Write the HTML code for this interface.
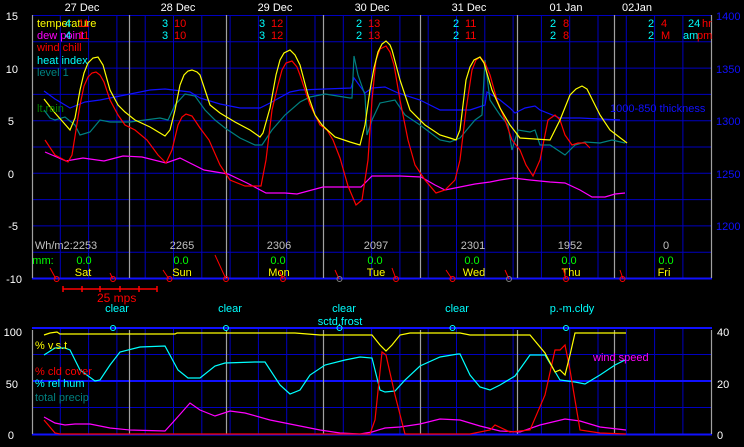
<!DOCTYPE html>
<html><head><meta charset="utf-8"><style>
html,body{margin:0;padding:0;background:#000;}
svg{display:block;}
text{font-family:"Liberation Sans",sans-serif;font-size:11px;}
</style></head><body>
<svg width="744" height="447" viewBox="0 0 744 447" xmlns="http://www.w3.org/2000/svg">
<rect width="744" height="447" fill="#000"/>
<g stroke="#0000c0" stroke-width="1" fill="none">
<path d="M32 15.5H712M32 41.8H712M32 68.1H712M32 94.4H712M32 120.7H712M32 147H712M32 173.3H712M32 199.6H712M32 225.9H712M32 252.2H712"/>
<path d="M60.3 15V278M88.6 15V278M116.9 15V278M145.2 15V278M173.5 15V278M201.8 15V278M230.1 15V278M258.4 15V278M286.7 15V278M315 15V278M343.3 15V278M371.6 15V278M399.9 15V278M428.2 15V278M456.5 15V278M484.8 15V278M513.1 15V278M541.4 15V278M569.7 15V278M598 15V278M626.3 15V278M654.6 15V278M682.9 15V278"/>
<path d="M32 354.5H712M32 407.5H712"/>
<path d="M60.3 328V434M88.6 328V434M116.9 328V434M145.2 328V434M173.5 328V434M201.8 328V434M230.1 328V434M258.4 328V434M286.7 328V434M315 328V434M343.3 328V434M371.6 328V434M399.9 328V434M428.2 328V434M456.5 328V434M484.8 328V434M513.1 328V434M541.4 328V434M569.7 328V434M598 328V434M626.3 328V434M654.6 328V434M682.9 328V434"/>
</g>
<g stroke="#1010ff" stroke-width="2" fill="none">
<path d="M32 278.5H712M32 328H712M32 381H712M32 434.5H712"/>
</g>
<g stroke="#a0a0a0" stroke-width="1.2" fill="none">
<path d="M32.5 15V278M129.5 15V278M226.5 15V278M323.5 15V278M420.5 15V278M517.5 15V278M614.5 15V278M711.5 15V278"/>
<path d="M32.5 330V434M129.5 330V434M226.5 330V434M323.5 330V434M420.5 330V434M517.5 330V434M614.5 330V434M711.5 330V434"/>
</g>
<g fill="none" stroke-width="1.2">
<polyline stroke="#1010ff" points="44,91 55,99 70,108 85,102 100,100 125,95 150,90 165,89 190,92 200,98 220,104 240,108 260,108 270,103 290,92 300,90 351,88 354,78 365,93 372,88 385,87 398,93 420,100 440,110 470,110 485,105 487,92 500,100 510,108 515,113 525,108 535,106 540,110 560,118 580,118 600,119 620,120"/>
<polyline stroke="#008080" points="44,110 50,118 55,120 65,117 75,125 80,135 90,132 100,120 110,122 130,122 160,118 168,120 175,105 185,94 195,96 205,110 215,120 225,128 240,138 255,145 262,145 272,130 285,115 300,102 310,97 325,94 350,98 352,98 354,56 358,75 365,95 367,135 372,120 380,103 395,100 405,115 420,125 440,140 450,142 460,138 475,120 482,115 485,60 490,100 500,115 508,125 512,150 518,130 530,132 535,130 540,145 550,145 565,155 575,145 585,142 600,143 612,140 625,143"/>
<polyline stroke="#ff00ff" points="45,152 66,161 83,158 104,161 123,156 142,157 166,163 180,158 204,170 228,174 247,183 266,193 285,193 297,194 323,187 361,187 372,176 400,176 421,177 435,185 445,190 460,187 475,184 490,182 500,180 513,178 530,180 550,182 565,183 580,190 592,197 605,197 615,194 625,193"/>
<polyline stroke="#ff0000" points="45,140 55,155 68,162 72,155 76,130 80,105 84,86 88,77 92,73 96,72 100,75 104,82 110,100 118,115 125,125 135,130 147,140 158,155 166,163 172,150 178,125 182,117 186,114 192,116 200,128 209,140 220,165 230,180 245,186 261,186 266,160 272,110 278,85 282,70 286,63 292,61 297,67 300,75 305,90 310,105 320,125 327,130 333,140 340,158 348,186 356,205 362,200 368,160 372,100 376,60 380,49 386,46 390,52 394,65 400,100 408,140 415,165 425,180 436,193 445,190 455,180 460,160 466,110 472,70 476,60 480,57 485,63 490,75 497,100 505,120 512,140 520,150 526,165 533,176 540,160 548,120 555,115 560,120 565,135 572,145 578,143 585,143 590,148"/>
<polyline stroke="#ffff00" points="44,99 55,113 63,122 70,130 75,118 80,90 84,73 88,63 93,58 98,57 103,65 110,90 118,105 125,112 135,120 150,127 165,136 170,130 175,110 180,85 184,75 188,71 192,70 197,72 200,75 205,90 210,105 220,113 235,122 250,130 260,137 263,133 270,108 276,75 280,60 284,53 290,50 295,55 300,65 308,95 315,115 322,125 335,137 350,142 360,145 365,125 370,90 374,68 378,52 382,44 386,41 390,45 392,50 400,80 405,95 410,110 425,125 440,135 450,138 456,140 460,130 466,80 470,67 474,60 480,57 484,63 486,70 492,90 500,108 510,125 520,138 550,140 560,120 570,95 576,89 582,86 587,89 590,95 600,115 610,130 627,143"/>
</g>
<g fill="#fff" text-anchor="middle" style="font-size:12px">
<text x="82" y="11">27 Dec</text><text x="178" y="11">28 Dec</text><text x="275" y="11">29 Dec</text><text x="372" y="11">30 Dec</text><text x="469" y="11">31 Dec</text><text x="566" y="11">01 Jan</text><text x="637" y="11">02Jan</text>
</g>
<g fill="#fff" text-anchor="end" style="font-size:12px">
<text x="18" y="20">15</text><text x="18" y="73">10</text><text x="14" y="125">5</text><text x="14" y="178">0</text><text x="18" y="230">-5</text><text x="22" y="283">-10</text>
<text x="22" y="336">100</text><text x="18" y="388">50</text><text x="14" y="439">0</text>
</g>
<g fill="#fff" style="font-size:12px"><text x="717" y="336">40</text><text x="717" y="388">20</text><text x="717" y="439">0</text></g>
<g fill="#1010ff" style="font-size:12px"><text x="716" y="20">1400</text><text x="716" y="73">1350</text><text x="716" y="125">1300</text><text x="716" y="178">1250</text><text x="716" y="230">1200</text></g>
<text x="610" y="112" fill="#1010ff">1000-850 thickness</text>
<text x="37" y="27" fill="#ffff00">temperature</text>
<text x="37" y="39" fill="#ff00ff">dew point</text>
<text x="37" y="51" fill="#ff0000">wind chill</text>
<text x="37" y="64" fill="#00ffff">heat index</text>
<text x="37" y="76" fill="#008080">level 1</text>
<text x="37" y="112" fill="#008000">lt.rain</text>
<g style="font-size:12px">
<text x="65" y="27" fill="#00ffff">4</text><text x="78" y="27" fill="#ff0000">11</text>
<text x="65" y="39" fill="#00ffff">4</text><text x="78" y="39" fill="#ff0000">11</text>
<text x="162" y="27" fill="#00ffff">3</text><text x="174" y="27" fill="#ff0000">10</text>
<text x="162" y="39" fill="#00ffff">3</text><text x="174" y="39" fill="#ff0000">10</text>
<text x="259" y="27" fill="#00ffff">3</text><text x="271" y="27" fill="#ff0000">12</text>
<text x="259" y="39" fill="#00ffff">3</text><text x="271" y="39" fill="#ff0000">12</text>
<text x="356" y="27" fill="#00ffff">2</text><text x="368" y="27" fill="#ff0000">13</text>
<text x="356" y="39" fill="#00ffff">2</text><text x="368" y="39" fill="#ff0000">13</text>
<text x="453" y="27" fill="#00ffff">2</text><text x="465" y="27" fill="#ff0000">11</text>
<text x="453" y="39" fill="#00ffff">2</text><text x="465" y="39" fill="#ff0000">11</text>
<text x="550" y="27" fill="#00ffff">2</text><text x="563" y="27" fill="#ff0000">8</text>
<text x="550" y="39" fill="#00ffff">2</text><text x="563" y="39" fill="#ff0000">8</text>
<text x="648" y="27" fill="#00ffff">2</text><text x="661" y="27" fill="#ff0000">4</text>
<text x="648" y="39" fill="#00ffff">2</text><text x="661" y="39" fill="#ff0000">M</text>
</g>
<text x="688" y="27" fill="#00ffff">24</text><text x="702" y="27" fill="#ff0000">hr</text>
<text x="683" y="39" fill="#00ffff">am</text><text x="697" y="39" fill="#ff0000">pm</text>
<g fill="#c0c0c0" text-anchor="middle">
<text x="66" y="249">Wh/m2:2253</text><text x="182" y="249">2265</text><text x="279" y="249">2306</text><text x="376" y="249">2097</text><text x="473" y="249">2301</text><text x="570" y="249">1952</text><text x="666" y="249">0</text>
</g>
<g fill="#00ff00" text-anchor="middle">
<text x="43" y="264">mm:</text><text x="84" y="264">0.0</text><text x="181" y="264">0.0</text><text x="278" y="264">0.0</text><text x="375" y="264">0.0</text><text x="472" y="264">0.0</text><text x="569" y="264">0.0</text><text x="666" y="264">0.0</text>
</g>
<g fill="#ffff00" text-anchor="middle">
<text x="83" y="276">Sat</text><text x="182" y="276">Sun</text><text x="279" y="276">Mon</text><text x="376" y="276">Tue</text><text x="474" y="276">Wed</text><text x="571" y="276">Thu</text><text x="664" y="276">Fri</text>
</g>
<g stroke="#ff0000" fill="none" stroke-width="1">
<path d="M50 268L56 279M110 273L113 279M163 270L169 279M215 255L226 279M279 270L283 279M335 270L339 279M392 268L396 279M446 270L452 279M505 270L509 279M563 268L566 279M620 270L623 279"/>
<circle cx="56.6" cy="279" r="2.5"/><circle cx="113" cy="279" r="2.5"/><circle cx="169.5" cy="279" r="2.5"/><circle cx="226" cy="279" r="2.5"/><circle cx="283" cy="279" r="2.5"/><circle cx="339.5" cy="279" r="2.5" stroke="#808080"/><circle cx="396" cy="279" r="2.5"/><circle cx="452.5" cy="279" r="2.5"/><circle cx="509" cy="279" r="2.5" stroke="#808080"/><circle cx="566" cy="279" r="2.5"/><circle cx="622.5" cy="279" r="2.5"/>
<path d="M63 289H157M63 286V292M82 286V292M100 286V292M120 286V292M139 286V292M157 286V292" stroke-width="1.5"/>
</g>
<text x="97" y="302" fill="#ff0000" style="font-size:12px">25 mps</text>
<g fill="#00ffff" text-anchor="middle">
<text x="117" y="312">clear</text><text x="230" y="312">clear</text><text x="344" y="312">clear</text><text x="457" y="312">clear</text><text x="572" y="312">p.-m.cldy</text><text x="340" y="325">sctd.frost</text>
</g>
<g stroke="#00ffff" fill="none"><circle cx="113" cy="328" r="2.5"/><circle cx="226" cy="328" r="2.5"/><circle cx="339.5" cy="328" r="2.5"/><circle cx="452.5" cy="328" r="2.5"/><circle cx="566" cy="328" r="2.5"/></g>
<g fill="none" stroke-width="1.2">
<polyline stroke="#ff00ff" points="44,417 55,423 65,425 75,424 90,424 110,428 130,430 165,431 175,420 190,403 200,410 215,416 230,411 245,413 270,420 290,424 320,430 340,433 360,434 372,432 385,428 400,427 420,424 440,419 460,420 480,426 500,431 520,432 540,425 565,419 580,421 600,427 626,430"/>
<polyline stroke="#00ffff" points="44,355 55,348 65,348 70,350 80,370 95,381 100,380 110,365 120,352 140,347 165,346 178,370 188,378 200,378 215,366 225,363 255,362 265,362 280,385 290,394 300,390 310,375 325,365 345,360 360,357 372,358 380,390 385,392 395,391 405,380 420,366 440,357 458,354 460,354 470,375 480,387 490,390 500,385 515,376 530,355 545,355 560,380 575,382 585,384 600,375 615,365 625,360"/>
<polyline stroke="#ff0000" points="44,420 55,433 60,434 370,434 375,420 382,352 386,355 395,395 405,434 470,434 490,430 495,425 510,432 530,430 545,395 555,350 560,350 565,345 570,370 580,430 600,433 626,434"/>
<polyline stroke="#ffff00" points="44,335 50,333 57,332 60,334 113,334 175,334 177,333 295,333 320,335 350,335 372,335 380,345 386,351 392,345 400,335 410,333 460,333 470,335 500,335 530,335 545,353 555,372 560,370 565,375 570,355 575,333 590,333 610,333 626,333"/>
</g>
<text x="35" y="349" fill="#ffff00">% v.s.t</text>
<text x="35" y="375" fill="#ff0000">% cld cover</text>
<text x="35" y="387" fill="#00ffff">% rel hum</text>
<text x="35" y="401" fill="#008080">total precip</text>
<text x="593" y="361" fill="#ff00ff">wind speed</text>
</svg>
</body></html>
